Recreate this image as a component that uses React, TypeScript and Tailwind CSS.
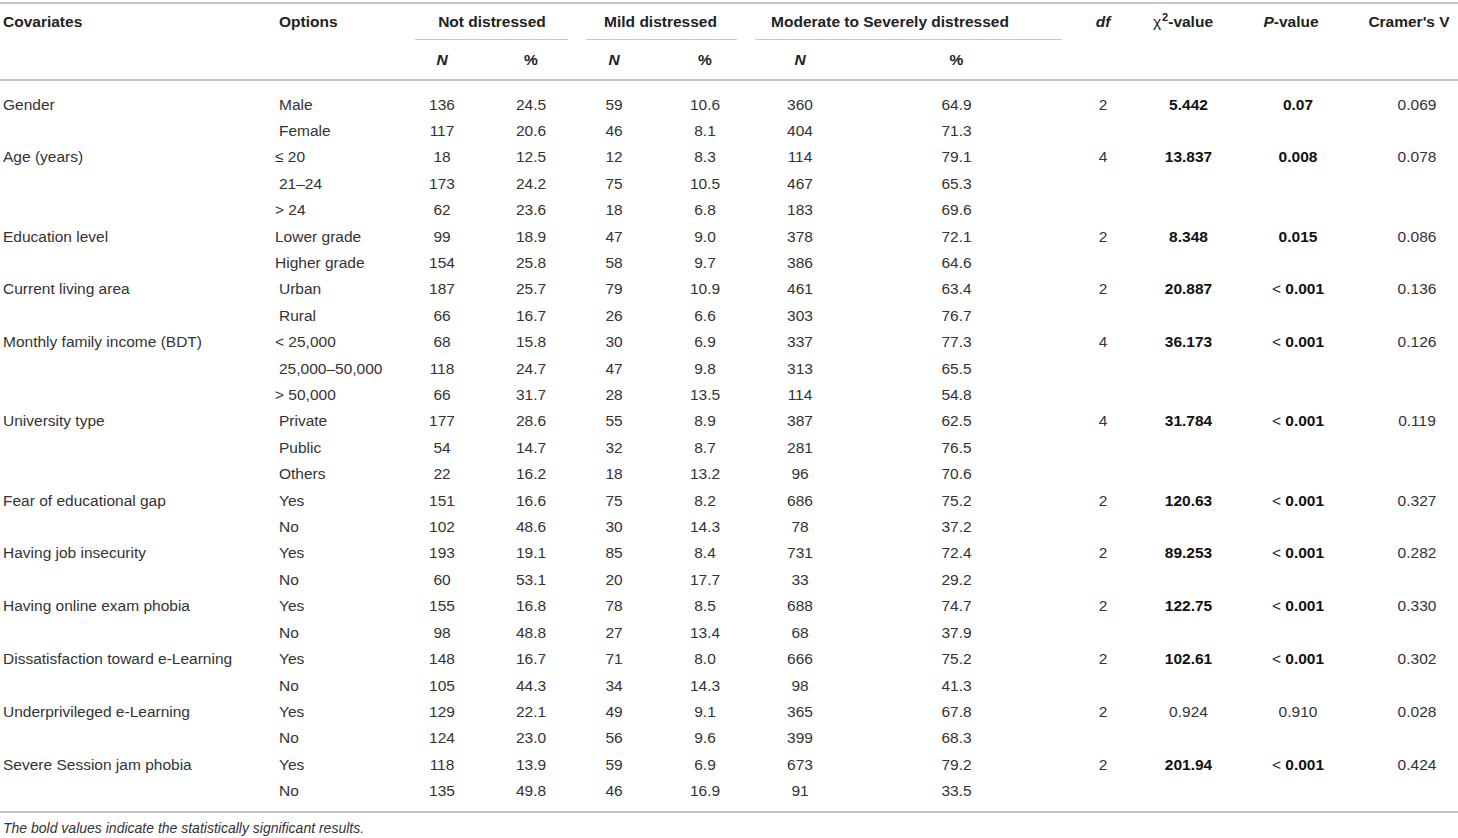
import React from "react";

type Row = {
  cov?: string;
  opt: string;
  sp?: boolean;
  v: string[];
  stats?: { df: string; chi: string; p: string; v: string; bold: boolean };
};

const rows: Row[] = [
  { cov: "Gender", opt: "Male", sp: true, v: ["136", "24.5", "59", "10.6", "360", "64.9"], stats: { df: "2", chi: "5.442", p: "0.07", v: "0.069", bold: true } },
  { opt: "Female", sp: true, v: ["117", "20.6", "46", "8.1", "404", "71.3"] },
  { cov: "Age (years)", opt: "≤ 20", v: ["18", "12.5", "12", "8.3", "114", "79.1"], stats: { df: "4", chi: "13.837", p: "0.008", v: "0.078", bold: true } },
  { opt: "21–24", sp: true, v: ["173", "24.2", "75", "10.5", "467", "65.3"] },
  { opt: "> 24", v: ["62", "23.6", "18", "6.8", "183", "69.6"] },
  { cov: "Education level", opt: "Lower grade", v: ["99", "18.9", "47", "9.0", "378", "72.1"], stats: { df: "2", chi: "8.348", p: "0.015", v: "0.086", bold: true } },
  { opt: "Higher grade", v: ["154", "25.8", "58", "9.7", "386", "64.6"] },
  { cov: "Current living area", opt: "Urban", sp: true, v: ["187", "25.7", "79", "10.9", "461", "63.4"], stats: { df: "2", chi: "20.887", p: "< 0.001", v: "0.136", bold: true } },
  { opt: "Rural", sp: true, v: ["66", "16.7", "26", "6.6", "303", "76.7"] },
  { cov: "Monthly family income (BDT)", opt: "< 25,000", v: ["68", "15.8", "30", "6.9", "337", "77.3"], stats: { df: "4", chi: "36.173", p: "< 0.001", v: "0.126", bold: true } },
  { opt: "25,000–50,000", sp: true, v: ["118", "24.7", "47", "9.8", "313", "65.5"] },
  { opt: "> 50,000", v: ["66", "31.7", "28", "13.5", "114", "54.8"] },
  { cov: "University type", opt: "Private", sp: true, v: ["177", "28.6", "55", "8.9", "387", "62.5"], stats: { df: "4", chi: "31.784", p: "< 0.001", v: "0.119", bold: true } },
  { opt: "Public", sp: true, v: ["54", "14.7", "32", "8.7", "281", "76.5"] },
  { opt: "Others", sp: true, v: ["22", "16.2", "18", "13.2", "96", "70.6"] },
  { cov: "Fear of educational gap", opt: "Yes", sp: true, v: ["151", "16.6", "75", "8.2", "686", "75.2"], stats: { df: "2", chi: "120.63", p: "< 0.001", v: "0.327", bold: true } },
  { opt: "No", sp: true, v: ["102", "48.6", "30", "14.3", "78", "37.2"] },
  { cov: "Having job insecurity", opt: "Yes", sp: true, v: ["193", "19.1", "85", "8.4", "731", "72.4"], stats: { df: "2", chi: "89.253", p: "< 0.001", v: "0.282", bold: true } },
  { opt: "No", sp: true, v: ["60", "53.1", "20", "17.7", "33", "29.2"] },
  { cov: "Having online exam phobia", opt: "Yes", sp: true, v: ["155", "16.8", "78", "8.5", "688", "74.7"], stats: { df: "2", chi: "122.75", p: "< 0.001", v: "0.330", bold: true } },
  { opt: "No", sp: true, v: ["98", "48.8", "27", "13.4", "68", "37.9"] },
  { cov: "Dissatisfaction toward e-Learning", opt: "Yes", sp: true, v: ["148", "16.7", "71", "8.0", "666", "75.2"], stats: { df: "2", chi: "102.61", p: "< 0.001", v: "0.302", bold: true } },
  { opt: "No", sp: true, v: ["105", "44.3", "34", "14.3", "98", "41.3"] },
  { cov: "Underprivileged e-Learning", opt: "Yes", sp: true, v: ["129", "22.1", "49", "9.1", "365", "67.8"], stats: { df: "2", chi: "0.924", p: "0.910", v: "0.028", bold: false } },
  { opt: "No", sp: true, v: ["124", "23.0", "56", "9.6", "399", "68.3"] },
  { cov: "Severe Session jam phobia", opt: "Yes", sp: true, v: ["118", "13.9", "59", "6.9", "673", "79.2"], stats: { df: "2", chi: "201.94", p: "< 0.001", v: "0.424", bold: true } },
  { opt: "No", sp: true, v: ["135", "49.8", "46", "16.9", "91", "33.5"] },
];

const GRID =
  "grid grid-cols-[275px_125px_84px_94px_72px_110px_80px_233px_60px_111px_108px_106px]";

function PValue({ p, bold }: { p: string; bold: boolean }) {
  if (p.startsWith("<")) {
    return (
      <span className="whitespace-nowrap">
        <span className="font-normal text-[#222]">&lt; </span>
        <span className={bold ? "font-bold text-[#111]" : ""}>{p.slice(2)}</span>
      </span>
    );
  }
  return <span className={bold ? "font-bold text-[#111]" : ""}>{p}</span>;
}

export default function App() {
  return (
    <div
      className="w-[1458px] h-[838px] bg-white text-[#333] text-[15.5px] overflow-hidden"
      style={{ fontFamily: '"Liberation Sans", Arial, Helvetica, sans-serif' }}
    >
      <div className="pt-[2px]">
        <div className="border-t-2 border-[#c4c4c4]" />
        {/* header row 1 */}
        <div className={`${GRID} h-[36px] font-bold text-[#222]`}>
          <div className="pl-[3px] flex items-center">Covariates</div>
          <div className="pl-[4px] flex items-center">Options</div>
          <div className="col-span-2 flex flex-col">
            <div className="flex-1 flex items-center justify-center pl-[6px]">Not distressed</div>
            <div className="h-px bg-[#c8c8c8] ml-[15px] mr-[10px]" />
          </div>
          <div className="col-span-2 flex flex-col">
            <div className="flex-1 flex items-center justify-center pr-[17px]">Mild distressed</div>
            <div className="h-px bg-[#c8c8c8] ml-[8px] mr-[23px]" />
          </div>
          <div className="col-span-2 flex flex-col">
            <div className="flex-1 flex items-center justify-center pr-[53px] whitespace-nowrap">
              Moderate to Severely distressed
            </div>
            <div className="h-px bg-[#c8c8c8] ml-[-5px] mr-[11px]" />
          </div>
          <div className="flex items-center justify-center italic">df</div>
          <div className="flex items-center justify-center pr-[11px] whitespace-nowrap">
            <span className="font-normal">χ</span>
            <sup className="text-[11px] -top-[0.45em] ml-[1px]">2</sup>
            <span>-value</span>
          </div>
          <div className="flex items-center justify-center pr-[14px] whitespace-nowrap">
            <span className="italic">P</span>-value
          </div>
          <div className="flex items-center justify-center pl-[8px] whitespace-nowrap">Cramer's V</div>
        </div>
        {/* header row 2 */}
        <div className={`${GRID} h-[39px] font-bold text-[#222]`}>
          <div />
          <div />
          <div className="flex items-center justify-center italic">N</div>
          <div className="flex items-center justify-center">%</div>
          <div className="flex items-center justify-center italic">N</div>
          <div className="flex items-center justify-center">%</div>
          <div className="flex items-center justify-center italic">N</div>
          <div className="flex items-center justify-center">%</div>
          <div />
          <div />
          <div />
          <div />
        </div>
        <div className="border-t-2 border-[#c4c4c4]" />
        {/* body */}
        <div className="pt-[10px] pb-[7px]">
          {rows.map((r, i) => (
            <div key={i} className={`${GRID} h-[26.42px] items-center`}>
              <div className="pl-[3px] whitespace-nowrap">{r.cov ?? ""}</div>
              <div className={`${r.sp ? "pl-[4px]" : "pl-0"} whitespace-nowrap`}>{r.opt}</div>
              {r.v.map((x, j) => (
                <div key={j} className="text-center">
                  {x}
                </div>
              ))}
              <div className="text-center">{r.stats?.df ?? ""}</div>
              <div className={`text-center ${r.stats?.bold ? "font-bold text-[#111]" : ""}`}>
                {r.stats?.chi ?? ""}
              </div>
              <div className="text-center">
                {r.stats ? <PValue p={r.stats.p} bold={r.stats.bold} /> : ""}
              </div>
              <div className="text-center pl-[24px]">{r.stats?.v ?? ""}</div>
            </div>
          ))}
        </div>
        <div className="border-t-2 border-[#c4c4c4]" />
        <div className="pt-[5px] pl-[3px] italic text-[14px] leading-[20px] text-[#333]">
          The bold values indicate the statistically significant results.
        </div>
      </div>
    </div>
  );
}
